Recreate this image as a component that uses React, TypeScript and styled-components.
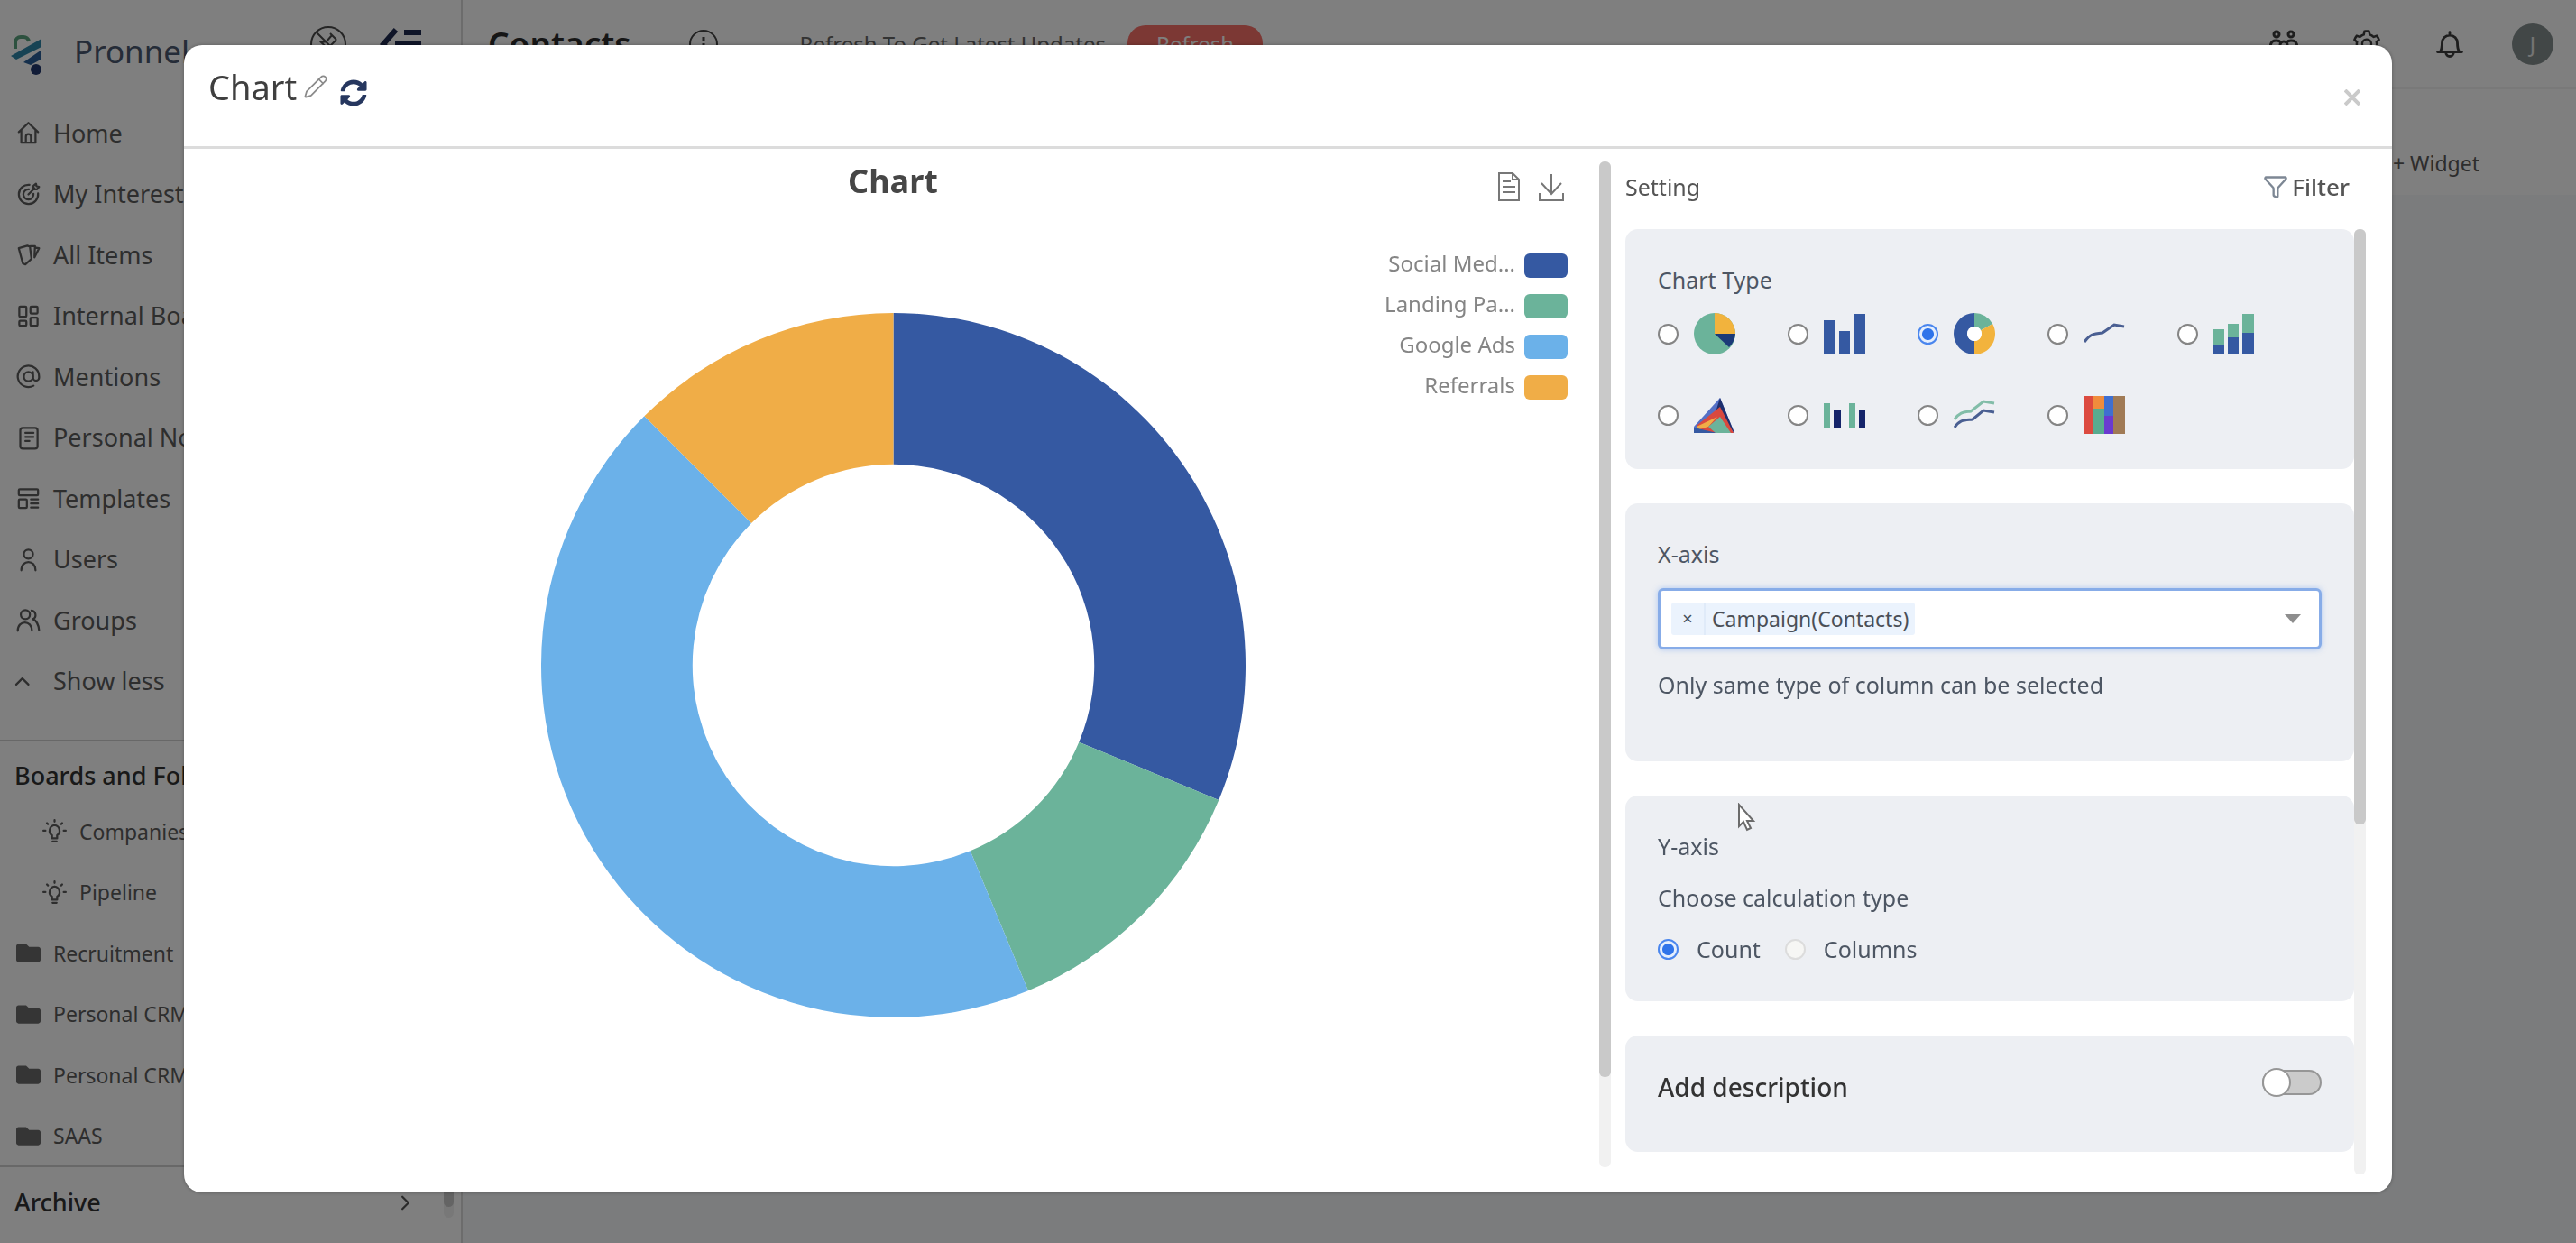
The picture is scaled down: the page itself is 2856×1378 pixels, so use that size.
import React from "react";
import styled, { createGlobalStyle } from "styled-components";
import { FaSyncAlt, FaFolder } from "react-icons/fa";
import { AiOutlineSetting } from "react-icons/ai";
import { ChevronRight, ChevronUp, Filter, Pencil } from "lucide-react";

const Global = createGlobalStyle`
  *, *::before, *::after { box-sizing: border-box; }
  html, body, #root { height: 100%; }
  body {
    margin: 0;
    overflow: hidden;
    font-family: "Noto Sans", "Open Sans", sans-serif;
    font-size: 25px;
    line-height: 36px;
    color: #4d5663;
  }
  button { font: inherit; color: inherit; background: none; border: 0; padding: 0; cursor: pointer; }
  a { color: inherit; text-decoration: none; }
  h1, h2, h3, p, ul, fieldset { margin: 0; padding: 0; border: 0; }
  ul { list-style: none; }
  svg { display: block; flex: none; }
`;

const Track = styled.div`
  flex: none;
  width: 13px;
  border-radius: 6px;
  background: #f1f1f1;
`;
const Thumb = styled.div<{ $size: number }>`
  height: ${(p) => p.$size}%;
  border-radius: 6px;
  background: #c9c9c9;
`;

/* ---------- page behind the dialog ---------- */
const Page = styled.div`
  display: grid;
  grid-template-columns: 513px minmax(0, 1fr);
  grid-template-rows: minmax(0, 1fr);
  height: 100%;
  background: #fff;
`;
const Sidebar = styled.aside`
  display: flex;
  flex-direction: column;
  border-right: 2px solid #d8d8d8;
  color: #5c5c5c;
`;
const SidebarScroll = styled.div`
  display: flex;
  flex: 1;
  min-height: 0;
  margin-bottom: 28px;
  padding-right: 8px;
`;
const SidebarContent = styled.div`
  flex: 1;
  min-width: 0;
  overflow: hidden;
`;
const SidebarTrack = styled(Track)`
  width: 11px;
  background: #f1f1f1;
`;
const Brand = styled.div`
  display: flex;
  flex: none;
  align-items: center;
  height: 114px;
  padding: 0 44px 0 12px;
  color: #4a5870;
  font-size: 35px;
`;
const Logo = styled.svg`
  margin-top: 8px;
`;
const BrandName = styled.span`
  margin-left: 34px;
  flex: 1;
`;
const BrandTools = styled.div`
  display: flex;
  align-items: center;
  gap: 37px;
  height: 84px;
  margin-bottom: 16px;
`;
const NavList = styled.ul<{ $height: number }>`
  display: grid;
  grid-auto-rows: 1fr;
  height: ${(p) => p.$height}px;
`;
const NavLink = styled.a<{ $child?: boolean; $small?: boolean }>`
  display: flex;
  align-items: center;
  gap: 14px;
  height: 100%;
  padding-left: ${(p) => (p.$child ? 47 : 18)}px;
  font-size: ${(p) => (p.$small ? 23 : 27)}px;
  white-space: nowrap;
  svg { width: 27px; height: 27px; }
`;
const SectionHead = styled.div`
  display: flex;
  align-items: center;
  justify-content: space-between;
  height: 80px;
  margin-top: -1px;
  padding: 0 29px 0 16px;
  border-top: 2px solid #d0d0d0;
  font-size: 27px;
  font-weight: 500;
  color: #333;
`;
const BoardsHead = styled(SectionHead)`
  height: 68px;
  margin-top: 31px;
  padding-top: 10px;
`;
const Main = styled.main`
  display: flex;
  flex-direction: column;
  background: #f6f9fb;
`;
const TopBar = styled.header`
  display: flex;
  align-items: center;
  height: 99px;
  padding: 0 2px 0 28px;
  background: #fff;
  border-bottom: 2px solid #f2f2f2;
  color: #3c3c3c;
`;
const BoardTitle = styled.h2`
  font-size: 37px;
  font-weight: 600;
  color: #2c2c2c;
  margin-right: 63px;
`;
const UpdateNote = styled.p`
  margin-left: 90px;
  font-size: 24px;
  color: #666;
`;
const RefreshButton = styled.button`
  width: 150px;
  height: 42px;
  margin-left: 24px;
  border-radius: 20px;
  background: #f87069;
  color: #fff;
  font-size: 24px;
`;
const TopIcons = styled.div`
  display: grid;
  grid-auto-flow: column;
  grid-auto-columns: 92px;
  place-items: center;
  margin-left: auto;
`;
const Avatar = styled.span`
  display: grid;
  place-items: center;
  width: 46px;
  height: 46px;
  border-radius: 50%;
  background: #858f8f;
  color: #e8e8e8;
  font-size: 23px;
`;
const WidgetBar = styled.div`
  display: flex;
  justify-content: flex-end;
  align-items: flex-end;
  height: 117px;
  padding: 0 107px 17px 0;
  background: #fff;
  font-size: 23px;
  color: #5a5a5a;
`;

/* ---------- dialog ---------- */
const Overlay = styled.div`
  position: fixed;
  inset: 0;
  display: flex;
  padding: 50px 204px 56px;
  background: rgba(0, 0, 0, 0.5);
`;
const Dialog = styled.section`
  display: flex;
  flex: 1;
  flex-direction: column;
  min-width: 0;
  border-radius: 20px;
  background: #fff;
  box-shadow: 0 0 4px rgba(0, 0, 0, 0.3);
`;
const DialogHead = styled.header`
  display: flex;
  align-items: center;
  height: 115px;
  padding: 0 35px 20px 27px;
  border-bottom: 3px solid #dcdcdc;
`;
const DialogTitle = styled.h1`
  font-size: 38px;
  font-weight: 400;
  line-height: 52px;
  color: #3f3f3f;
`;
const RenameButton = styled.button`
  margin-left: 7px;
  color: #8a8a8a;
`;
const ReloadButton = styled.button`
  margin: 13px 0 0 13px;
  color: #26375f;
`;
const CloseButton = styled.button`
  margin: 23px 0 0 auto;
  color: #cacaca;
`;
const DialogBody = styled.div`
  display: grid;
  grid-template-columns: minmax(0, 1582fr) minmax(0, 866fr);
  flex: 1;
  min-height: 0;
`;
const ChartPane = styled.div`
  display: flex;
  padding: 14px 0 28px;
  min-height: 0;
`;
const ChartCanvas = styled.figure`
  display: grid;
  grid-template-columns: 1fr 50% 1fr;
  grid-template-rows: 88px auto;
  flex: 1;
  margin: 0;
  padding-left: 3px;
`;
const ChartTitle = styled.h2`
  grid-column: 2;
  font-size: 36px;
  line-height: 44px;
  text-align: center;
  color: #464646;
`;
const ChartTools = styled.div`
  display: flex;
  justify-content: flex-end;
  align-items: flex-start;
  gap: 21px;
  padding: 12px 39px 0 0;
  color: #777;
`;
const Donut = styled.svg`
  grid-column: 2;
  width: 100%;
  margin-top: 79px;
`;
const Legend = styled.ul`
  display: flex;
  flex-direction: column;
  gap: 9px;
  padding: 7px 35px 0 0;
  color: #858585;
  font-size: 24px;
`;
const LegendItem = styled.li`
  display: flex;
  justify-content: flex-end;
  align-items: center;
  gap: 10px;
`;
const Swatch = styled.span<{ $color: string }>`
  width: 48px;
  height: 27px;
  margin-top: 5px;
  border-radius: 6px;
  background: ${(p) => p.$color};
`;
const SettingsPane = styled.div`
  display: flex;
  flex-direction: column;
  min-height: 0;
  padding: 0 29px 20px 16px;
`;
const SettingsHead = styled.div`
  display: flex;
  justify-content: space-between;
  align-items: center;
  height: 89px;
  padding: 0 18px 5px 0;
  flex: none;
  color: #555;
`;
const FilterButton = styled.button`
  display: flex;
  align-items: center;
  gap: 4px;
  font-size: 26px;
  font-weight: 500;
  svg { color: #7d8794; }
`;
const SettingsScroll = styled.div`
  display: flex;
  flex: 1;
  min-height: 0;
`;
const Cards = styled.div`
  display: flex;
  flex: 1;
  flex-direction: column;
  gap: 38px;
  overflow: hidden;
`;
const Card = styled.section<{ $bottom: number }>`
  flex: none;
  padding: 38px 36px ${(p) => p.$bottom}px;
  border-radius: 14px;
  background: #edeff3;
`;
const CardLabel = styled.label`
  display: block;
`;
const CardText = styled.p`
  display: block;
`;
const TypeGrid = styled.div`
  display: grid;
  grid-template-columns: repeat(5, 144px);
  grid-auto-rows: 90px;
  align-items: center;
  margin-top: -3px;
`;
const TypeOption = styled.label`
  display: flex;
  align-items: center;
  gap: 17px;
`;
const Radio = styled.input`
  appearance: none;
  flex: none;
  width: 23px;
  height: 23px;
  margin: 0;
  border: 2px solid #858585;
  border-radius: 50%;
  background: #fff;
  &:checked {
    border-color: #4a86ee;
    background: radial-gradient(circle, #2f74ea 0 6px, #e4eefd 7px);
  }
  &:disabled {
    border-color: #dcdcdc;
    background: #f6f6f4;
  }
`;
const SelectBox = styled.div`
  display: flex;
  align-items: center;
  height: 68px;
  margin: 20px 0 21px;
  padding: 0 20px 0 12px;
  border: 3px solid #87ace8;
  border-radius: 6px;
  background: #fff;
  box-shadow: 0 0 6px rgba(110, 160, 240, 0.5);
`;
const Tag = styled.span`
  display: flex;
  height: 36px;
  border-radius: 3px;
  background: #ebf3fd;
  color: #4a4f57;
  font-size: 23px;
`;
const TagRemove = styled.button`
  width: 38px;
  border-right: 2px solid #e0ebf9;
  font-size: 20px;
`;
const TagText = styled.span`
  padding: 0 7px;
`;
const ComboInput = styled.input`
  flex: 1;
  min-width: 0;
  border: 0;
  outline: 0;
  background: transparent;
  font: inherit;
`;
const Caret = styled.span`
  border: 9px solid transparent;
  border-top: 10px solid #8e8e8e;
  border-bottom: 0;
`;
const RadioRow = styled.div`
  display: flex;
  align-items: center;
  gap: 27px;
`;
const RadioLabel = styled.label`
  display: flex;
  align-items: center;
  gap: 20px;
`;
const CalcStack = styled.fieldset`
  display: flex;
  flex-direction: column;
  gap: 21px;
`;
const DescriptionRow = styled.div`
  display: flex;
  justify-content: space-between;
  align-items: flex-start;
  font-size: 28px;
  line-height: 38px;
  font-weight: 500;
  color: #333;
`;
const Toggle = styled.input`
  appearance: none;
  display: flex;
  align-items: center;
  width: 66px;
  height: 28px;
  margin: 0;
  border: 2px solid #969696;
  border-radius: 14px;
  background: #cbcbcb;
  &::before {
    content: "";
    flex: none;
    width: 32px;
    height: 32px;
    margin-left: -2px;
    border: 2px solid #969696;
    border-radius: 50%;
    background: #fff;
  }
`;
const Pointer = styled.svg`
  position: absolute;
  left: 1926px;
  top: 890px;
`;

const NAVY = "#3559a2";
const GREEN = "#6bb39a";
const SKY = "#6bb1e9";
const ORANGE = "#f0ad47";
const AMBER = "#f2b33d";

const SERIES = [
  { name: "Social Med...", color: NAVY, value: 5 },
  { name: "Landing Pa...", color: GREEN, value: 2 },
  { name: "Google Ads", color: SKY, value: 7 },
  { name: "Referrals", color: ORANGE, value: 2 },
];

function arc(from: number, to: number, outer: number, inner: number) {
  const at = (t: number, r: number) =>
    `${(r * Math.sin(2 * Math.PI * t)).toFixed(2)} ${(-r * Math.cos(2 * Math.PI * t)).toFixed(2)}`;
  const big = to - from > 0.5 ? 1 : 0;
  return `M${at(from, outer)} A${outer} ${outer} 0 ${big} 1 ${at(to, outer)} L${at(to, inner)} A${inner} ${inner} 0 ${big} 0 ${at(from, inner)} Z`;
}

function DonutChart() {
  const total = SERIES.reduce((sum, s) => sum + s.value, 0);
  let run = 0;
  return (
    <Donut viewBox="-392 -392 784 784" role="img" aria-label="Chart">
      {SERIES.map((s) => {
        const from = run / total;
        run += s.value;
        return <path key={s.name} d={arc(from, run / total, 391, 223)} fill={s.color} />;
      })}
    </Donut>
  );
}

const line = { fill: "none", stroke: "currentColor", strokeWidth: 2, strokeLinecap: "round", strokeLinejoin: "round" } as const;
const Icon = ({ children, size = 27 }: { children: React.ReactNode; size?: number }) => (
  <svg viewBox="0 0 24 24" width={size} height={size} {...line}>{children}</svg>
);

const HomeIcon = () => <Icon><path d="M2.5 11 12 2l9.500 9M5 9v12.500h14V9M9.500 21v-5.500a2.500 2.500 0 0 1 5 0V21" /></Icon>;
const TargetIcon = () => <Icon><path d="M13 2.500A9.500 9.500 0 1 0 21.500 11M12.500 7A5 5 0 1 0 17 11.500M12 12l6-6M17 7V3.500L19.500 1.500 20 4l2.500.5L20.500 7z" /></Icon>;
const CardsIcon = () => <Icon><path d="M2.500 5.500 11 3l2.500 1L15 16l-6 5.500-2.500-1zM14 3.500h4.500l-.5 10M19.500 5l3 .5-4.500 9" /></Icon>;
const BoardIcon = () => <Icon><rect x="3" y="2.500" width="7" height="10" rx="1" /><rect x="14" y="2.500" width="7" height="7" rx="1" /><rect x="3" y="16.500" width="7" height="5" rx="1" /><rect x="14" y="13.500" width="7" height="8" rx="1" /></Icon>;
const AtIcon = () => <Icon><circle cx="12" cy="12" r="4.500" /><path d="M16.500 7.500V13a3 3 0 0 0 6 0v-1A10.500 10.500 0 1 0 17 21" /></Icon>;
const NoteIcon = () => <Icon><rect x="4" y="2" width="17" height="20.500" rx="2.500" /><path d="M9 7h8M9 11h8M9 15h4" /></Icon>;
const TemplateIcon = () => <Icon><rect x="2.500" y="3" width="19" height="6" rx="1" /><rect x="2.500" y="13" width="8" height="8.500" rx="1" /><path d="M14.500 13h7M14.500 17h7M14.500 21h7" /></Icon>;
const UserIcon = () => <Icon><circle cx="12" cy="6.500" r="4.500" /><path d="M5 22.500c0-11 14-11 14 0" /></Icon>;
const GroupIcon = () => <Icon><circle cx="9" cy="6.500" r="4.500" /><path d="M1.500 22.500c0-11 14-11 14 0M15 2.500a4.500 4.500 0 0 1 1.500 8.500c3.500 1.500 5.500 5.500 6 11" /></Icon>;
const BulbIcon = () => <Icon><path d="M12 6a5.500 5.500 0 0 0-2.500 10v3h5v-3A5.500 5.500 0 0 0 12 6zM10 22h4M12 1v1.500M4.500 4l1 1M19.500 4l-1 1M1 11.500h2M21 11.500h2" /></Icon>;
const BellIcon = () => <Icon size={34}><path d="M2.500 18h19M4.500 18c1-1.500 1.500-3 1.500-7a6 6 0 0 1 12 0c0 4 .5 5.500 1.500 7M9 18.500a3 3 0 0 0 6 0M12 2.500v2" /></Icon>;

const PeopleIcon = () => (
  <svg width="34" height="34" viewBox="0 0 34 34" {...line} strokeWidth={3}>
    <circle cx="9" cy="6" r="3" />
    <circle cx="25" cy="6" r="3" />
    <path d="M2 22c0-9 4-9 7-9 2 0 4 1 5 2M32 22c0-9-4-9-7-9-2 0-4 1-5 2" />
    <circle cx="17" cy="18" r="4" />
    <path d="M9 32c0-9 16-9 16 0" />
  </svg>
);

const NAV = [
  { text: "Home", icon: <HomeIcon /> },
  { text: "My Interests", icon: <TargetIcon /> },
  { text: "All Items", icon: <CardsIcon /> },
  { text: "Internal Boards", icon: <BoardIcon /> },
  { text: "Mentions", icon: <AtIcon /> },
  { text: "Personal Notes", icon: <NoteIcon /> },
  { text: "Templates", icon: <TemplateIcon /> },
  { text: "Users", icon: <UserIcon /> },
  { text: "Groups", icon: <GroupIcon /> },
  { text: "Show less", icon: <ChevronUp viewBox="6 0 24 24" overflow="visible" /> },
];

const BOARDS = [
  { text: "Companies", child: true },
  { text: "Pipeline", child: true },
  { text: "Recruitment" },
  { text: "Personal CRM" },
  { text: "Personal CRM" },
  { text: "SAAS" },
];

const Glyph = ({ children }: { children: React.ReactNode }) => (
  <svg width="46" height="46" viewBox="0 0 46 46">{children}</svg>
);

const CHART_TYPES = [
  { name: "Pie", art: <Glyph><circle cx="23" cy="23" r="23" fill={GREEN} /><path d="M23 23V0a23 23 0 0 1 23 23z" fill={AMBER} /><path d="M23 23h23a23 23 0 0 1-7 15z" fill="#1c3a78" /></Glyph> },
  { name: "Bar", art: <Glyph><path d="M0 8h13v38H0zM17 20h12v26H17zM33 1h13v45H33z" fill={NAVY} /></Glyph> },
  { name: "Donut", art: <Glyph><g transform="translate(23 23)"><path d={arc(0.5, 1, 23, 8)} fill={NAVY} /><path d={arc(0, 0.17, 23, 8)} fill={GREEN} /><path d={arc(0.17, 0.5, 23, 8)} fill={AMBER} /><circle r="8" fill="#fff" /></g></Glyph> },
  { name: "Line", art: <Glyph><path d="M1 32C7 24 10 23 21 22L34 13l11 2" fill="none" stroke="#4a5f92" strokeWidth="3" /></Glyph> },
  { name: "Stacked bar", art: <Glyph><path d="M0 18h12v17H0zM16 12h12v15H16zM32 1h13v21H32z" fill={GREEN} /><path d="M0 35h12v11H0zM16 27h12v19H16zM32 22h13v24H32z" fill={NAVY} /></Glyph> },
  { name: "Area", art: <Glyph><path d="M29 4 45 43H0V36z" fill="#5470c6" /><path d="M29 4 45 43 24 20z" fill="#1f2f6e" /><path d="M29 14 44 43H4V34z" fill="#d9493f" /><path d="M3 36 26 25 16 36 6 39z" fill={ORANGE} /><path d="M0 37 26 43H0z" fill={NAVY} /><path d="M29 25 41 43H24L16 36z" fill={GREEN} /></Glyph> },
  { name: "Grouped bar", art: <Glyph><path d="M0 10h7v27H0zM28 10h7v27H28z" fill={GREEN} /><path d="M11 17h8v20H11zM39 17h7v20H39z" fill="#15246a" /></Glyph> },
  { name: "Multi line", art: <Glyph><path d="M1 28C7 19 12 20 19 19L33 8l12 2" fill="none" stroke="#82bda8" strokeWidth="3" /><path d="M1 37C7 28 12 29 21 28L33 18l12 2" fill="none" stroke="#4a5f92" strokeWidth="3" /></Glyph> },
  { name: "Treemap", art: <Glyph><path d="M0 2h11v42H0z" fill="#dc4a3f" /><path d="M11 2h12v14H11z" fill="#f08c3c" /><path d="M11 16h12v28H11z" fill="#58ab8f" /><path d="M23 2h10v22H23z" fill="#3f6fd0" /><path d="M23 24h10v20H23z" fill="#6a3ad0" /><path d="M33 2h13v42H33z" fill="#a07a55" /></Glyph> },
];

function BackgroundPage() {
  return (
    <Page>
      <Sidebar>
        <Brand>
          <Logo width="36" height="46" viewBox="0 0 36 46">
            <path d="M5 16V9a6 6 0 0 1 6-6h3a6 6 0 0 1 6 5" fill="none" stroke="#5aa37e" strokeWidth="4" />
            <path d="M34 5v9L6 28 0 24z" fill="#2f86a8" />
            <path d="M33 18v10l-11 6-8-3z" fill="#2b5f98" />
            <circle cx="28" cy="39" r="6" fill="#22386e" />
          </Logo>
          <BrandName>Pronnel</BrandName>
          <BrandTools>
            <svg width="40" height="40" viewBox="0 0 40 40" fill="none" stroke="#4a4a4a" strokeWidth="2">
              <circle cx="20" cy="20" r="19" />
              <path d="M7 7l26 26M22 8l7 7M24 10l-6 7-6 1 10 9 1-6 6-6M16 22l-6 7" />
            </svg>
            <svg width="46" height="38" viewBox="0 0 46 38" fill="none" stroke="#1f2b50" strokeWidth="6">
              <path d="M18 3 4 19l14 16M27 6h19M17 19h29M27 32h19" />
            </svg>
          </BrandTools>
        </Brand>
        <SidebarScroll>
          <SidebarContent>
            <NavList $height={675}>
              {NAV.map((n) => (
                <li key={n.text}><NavLink href="#">{n.icon}{n.text}</NavLink></li>
              ))}
            </NavList>
            <BoardsHead>Boards and Folders</BoardsHead>
            <NavList $height={405}>
              {BOARDS.map((b, i) => (
                <li key={i}>
                  <NavLink href="#" $child={b.child} $small>
                    {b.child ? <BulbIcon /> : <FaFolder color="#6a6a6a" />}{b.text}
                  </NavLink>
                </li>
              ))}
            </NavList>
            <SectionHead>Archive<ChevronRight size={27} color="#555" /></SectionHead>
          </SidebarContent>
          <SidebarTrack><Thumb $size={99} /></SidebarTrack>
        </SidebarScroll>
      </Sidebar>
      <Main>
        <TopBar>
          <BoardTitle>Contacts</BoardTitle>
          <svg width="34" height="34" viewBox="0 0 34 34" fill="none" stroke="#444" strokeWidth="2">
            <circle cx="17" cy="17" r="15" />
            <path d="M17 9v4M17 16v10" strokeWidth="3" />
          </svg>
          <UpdateNote>Refresh To Get Latest Updates</UpdateNote>
          <RefreshButton>Refresh</RefreshButton>
          <TopIcons>
            <PeopleIcon />
            <AiOutlineSetting size={36} />
            <BellIcon />
            <Avatar>J</Avatar>
          </TopIcons>
        </TopBar>
        <WidgetBar><button>+ Widget</button></WidgetBar>
      </Main>
    </Page>
  );
}

export default function App() {
  return (
    <>
      <Global />
      <BackgroundPage />
      <Overlay>
        <Dialog role="dialog" aria-label="Chart">
          <DialogHead>
            <DialogTitle>Chart</DialogTitle>
            <RenameButton aria-label="Rename"><Pencil size={28} strokeWidth={1.5} /></RenameButton>
            <ReloadButton aria-label="Reload"><FaSyncAlt size={30} /></ReloadButton>
            <CloseButton aria-label="Close">
              <svg width="18" height="18" viewBox="0 0 18 18" stroke="currentColor" strokeWidth="4"><path d="M1 1l16 16M17 1 1 17" /></svg>
            </CloseButton>
          </DialogHead>
          <DialogBody>
            <ChartPane>
              <ChartCanvas>
                <ChartTitle>Chart</ChartTitle>
                <ChartTools>
                  <button aria-label="Data view">
                    <svg width="24" height="32" viewBox="0 0 24 32" fill="none" stroke="currentColor" strokeWidth="2">
                      <path d="M1 1h15l7 7v23H1zM16 1v7h7M5 10h9M5 16h14M5 22h14" />
                    </svg>
                  </button>
                  <button aria-label="Save image">
                    <svg width="28" height="32" viewBox="0 0 28 32" fill="none" stroke="currentColor" strokeWidth="2">
                      <path d="M14 2v22M3 12l11 12 11-12M1 23v8h26v-8" />
                    </svg>
                  </button>
                </ChartTools>
                <DonutChart />
                <Legend>
                  {SERIES.map((s) => (
                    <LegendItem key={s.name}>{s.name}<Swatch $color={s.color} /></LegendItem>
                  ))}
                </Legend>
              </ChartCanvas>
              <Track><Thumb $size={91} /></Track>
            </ChartPane>
            <SettingsPane>
              <SettingsHead>
                <span>Setting</span>
                <FilterButton><Filter size={28} strokeWidth={2} />Filter</FilterButton>
              </SettingsHead>
              <SettingsScroll>
                <Cards>
                  <Card $bottom={15}>
                    <CardText>Chart Type</CardText>
                    <TypeGrid>
                      {CHART_TYPES.map((t) => (
                        <TypeOption key={t.name}>
                          <Radio type="radio" name="chart-type" aria-label={t.name} defaultChecked={t.name === "Donut"} />
                          {t.art}
                        </TypeOption>
                      ))}
                    </TypeGrid>
                  </Card>
                  <Card $bottom={67}>
                    <CardLabel htmlFor="x-axis">X-axis</CardLabel>
                    <SelectBox>
                      <Tag><TagRemove aria-label="Remove">×</TagRemove><TagText>Campaign(Contacts)</TagText></Tag>
                      <ComboInput id="x-axis" />
                      <Caret />
                    </SelectBox>
                    <CardText>Only same type of column can be selected</CardText>
                  </Card>
                  <Card $bottom={40}>
                    <CalcStack>
                      <CardText>Y-axis</CardText>
                      <CardText>Choose calculation type</CardText>
                      <RadioRow>
                        <RadioLabel><Radio type="radio" name="calc" defaultChecked />Count</RadioLabel>
                        <RadioLabel><Radio type="radio" name="calc" disabled />Columns</RadioLabel>
                      </RadioRow>
                    </CalcStack>
                  </Card>
                  <Card $bottom={53}>
                    <DescriptionRow>
                      <label htmlFor="describe">Add description</label>
                      <Toggle id="describe" type="checkbox" />
                    </DescriptionRow>
                  </Card>
                </Cards>
                <Track><Thumb $size={63} /></Track>
              </SettingsScroll>
            </SettingsPane>
          </DialogBody>
        </Dialog>
      </Overlay>
      <Pointer width="22" height="32" viewBox="0 0 22 32">
        <path d="M2 2v24l5-5 4 9 4-2-4-8h7z" fill="#fff" stroke="#6b6b6b" strokeWidth="2" />
      </Pointer>
    </>
  );
}
